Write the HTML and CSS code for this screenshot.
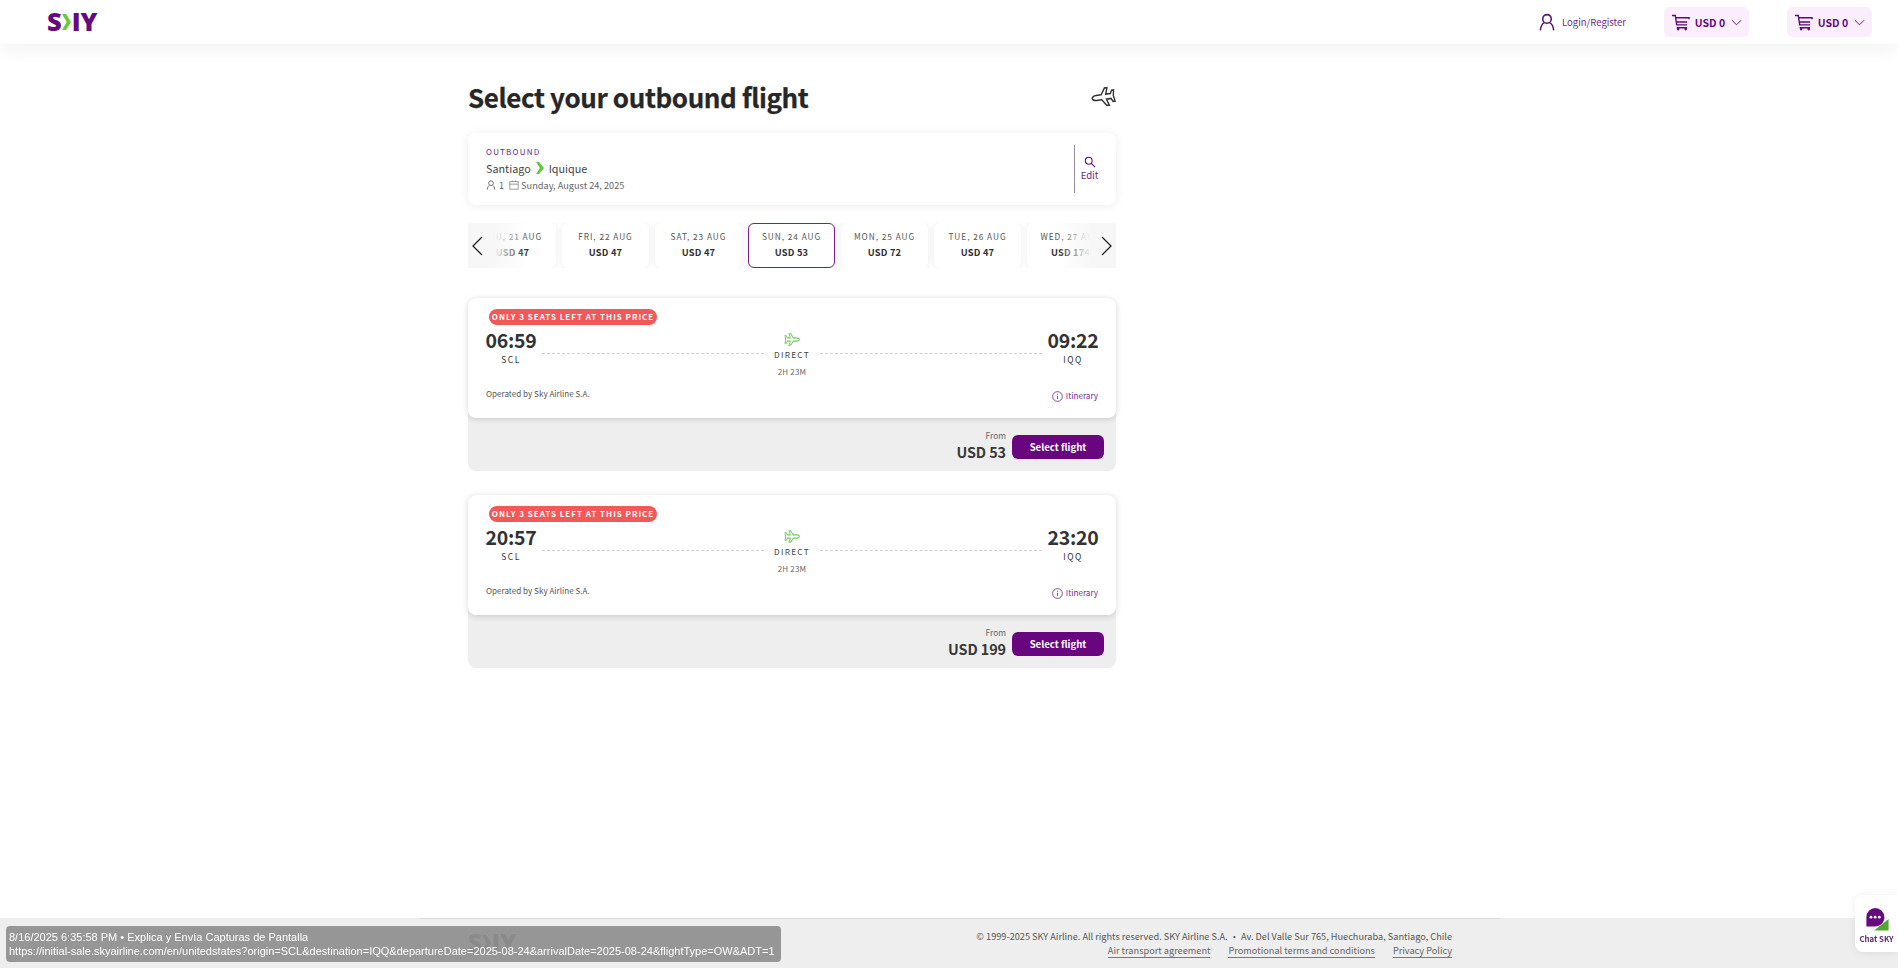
FILE: index.html
```html
<!DOCTYPE html>
<html lang="en">
<head>
<meta charset="utf-8">
<title>Select your outbound flight</title>
<link rel="stylesheet" href="styles.css">
</head>
<body>
<div class="page">
  <header class="topbar">
    <div class="logo"><span>S</span><svg class="logo-chev" viewBox="0 0 10 18"><path d="M0 0h4.600L10 9l-5.400 9H0l5.200-9z"/></svg><span>IY</span></div>
    <div class="top-actions">
      <a class="login">
        <svg class="ic-user" viewBox="0 0 18 20"><circle cx="9" cy="6.500" r="4.800"/><path d="M1.500 19.500c.5-5 3-8 4.500-8.500M16.500 19.500c-.5-5-3-8-4.500-8.500"/></svg>
        <span>Login/Register</span>
      </a>
      <div class="cart">
        <svg class="ic-cart" viewBox="0 0 20 18"><path d="M1 1.500h3.500l1.500 10h11M5 4h14v1.500M6 8.500h11M6 14.500h11"/><circle cx="7.500" cy="16" r="1.400"/><circle cx="15.500" cy="16" r="1.400"/></svg>
        <b>USD 0</b>
        <svg class="ic-down" viewBox="0 0 12 7"><path d="M1 1l5 5 5-5"/></svg>
      </div>
      <div class="cart">
        <svg class="ic-cart" viewBox="0 0 20 18"><path d="M1 1.500h3.500l1.500 10h11M5 4h14v1.500M6 8.500h11M6 14.500h11"/><circle cx="7.500" cy="16" r="1.400"/><circle cx="15.500" cy="16" r="1.400"/></svg>
        <b>USD 0</b>
        <svg class="ic-down" viewBox="0 0 12 7"><path d="M1 1l5 5 5-5"/></svg>
      </div>
    </div>
  </header>

  <main class="main">
    <div class="title-row">
      <h1>Select your outbound flight</h1>
      <svg class="ic-title-plane" viewBox="0 0 24 16" preserveAspectRatio="none"><path d="M23 8c0-1-2-2-4-2h-5L10 1H7.500l2 5H5L3.500 3.500h-2L2.500 8l-1 4.500h2L5 10h4.500l-2 5H10l4-5h5c2 0 4-1 4-2z"/></svg>
    </div>

    <section class="summary">
      <div class="summary-info">
        <div class="eyebrow">OUTBOUND</div>
        <div class="route">Santiago <svg class="route-chev" viewBox="0 0 8 12"><path d="M0 0h3l5 6-5 6H0l4-6z"/></svg> Iquique</div>
        <div class="meta">
          <svg class="ic-mini" viewBox="0 0 12 12"><circle cx="6" cy="3.800" r="2.800"/><path d="M1.500 11.500c.3-3 1.500-4.500 2.500-5M10.500 11.500c-.3-3-1.500-4.500-2.500-5"/></svg>
          <span class="pax">1</span>
          <svg class="ic-mini cal" viewBox="0 0 12 12"><rect x="1" y="2" width="10" height="9"/><path d="M1 5h10M4 .5v2M8 .5v2"/></svg>
          <span>Sunday, August 24, 2025</span>
        </div>
      </div>
      <a class="edit">
        <svg class="ic-search" viewBox="0 0 14 14"><circle cx="5.500" cy="5.500" r="4"/><path d="M8.500 8.500l4.500 4.500"/></svg>
        <span>Edit</span>
      </a>
    </section>

    <section class="dates">
      <div class="date"><span>THU, 21 AUG</span><b>USD 47</b></div>
      <div class="date"><span>FRI, 22 AUG</span><b>USD 47</b></div>
      <div class="date"><span>SAT, 23 AUG</span><b>USD 47</b></div>
      <div class="date active"><span>SUN, 24 AUG</span><b>USD 53</b></div>
      <div class="date"><span>MON, 25 AUG</span><b>USD 72</b></div>
      <div class="date"><span>TUE, 26 AUG</span><b>USD 47</b></div>
      <div class="date"><span>WED, 27 AUG</span><b>USD 174</b></div>
      <div class="fade fade-left"><svg viewBox="0 0 12 20"><path d="M11 1L2 10l9 9"/></svg></div>
      <div class="fade fade-right"><svg viewBox="0 0 12 20"><path d="M1 1l9 9-9 9"/></svg></div>
    </section>

    <article class="flight">
      <div class="flight-card">
        <div class="badge">ONLY 3 SEATS LEFT AT THIS PRICE</div>
        <div class="flight-grid">
          <div class="stop"><strong>06:59</strong><span>SCL</span></div>
          <div class="line"></div>
          <div class="mid">
            <svg class="ic-plane" viewBox="0 0 24 16" preserveAspectRatio="none"><path d="M23 8c0-1-2-2-4-2h-5L10 1H7.500l2 5H5L3.500 3.500h-2L2.500 8l-1 4.500h2L5 10h4.500l-2 5H10l4-5h5c2 0 4-1 4-2z"/></svg>
            <div class="direct">DIRECT</div>
            <div class="dur">2H 23M</div>
          </div>
          <div class="line"></div>
          <div class="stop"><strong>09:22</strong><span>IQQ</span></div>
        </div>
        <div class="flight-foot">
          <span class="operated">Operated by Sky Airline S.A.</span>
          <a class="itin"><svg class="ic-info" viewBox="0 0 12 12"><circle cx="6" cy="6" r="5.300"/><path d="M6 5.200v3.600M6 3v1"/></svg>Itinerary</a>
        </div>
      </div>
      <div class="price-bar">
        <div class="price"><small>From</small><b>USD 53</b></div>
        <button class="select">Select flight</button>
      </div>
    </article>

    <article class="flight">
      <div class="flight-card">
        <div class="badge">ONLY 3 SEATS LEFT AT THIS PRICE</div>
        <div class="flight-grid">
          <div class="stop"><strong>20:57</strong><span>SCL</span></div>
          <div class="line"></div>
          <div class="mid">
            <svg class="ic-plane" viewBox="0 0 24 16" preserveAspectRatio="none"><path d="M23 8c0-1-2-2-4-2h-5L10 1H7.500l2 5H5L3.500 3.500h-2L2.500 8l-1 4.500h2L5 10h4.500l-2 5H10l4-5h5c2 0 4-1 4-2z"/></svg>
            <div class="direct">DIRECT</div>
            <div class="dur">2H 23M</div>
          </div>
          <div class="line"></div>
          <div class="stop"><strong>23:20</strong><span>IQQ</span></div>
        </div>
        <div class="flight-foot">
          <span class="operated">Operated by Sky Airline S.A.</span>
          <a class="itin"><svg class="ic-info" viewBox="0 0 12 12"><circle cx="6" cy="6" r="5.300"/><path d="M6 5.200v3.600M6 3v1"/></svg>Itinerary</a>
        </div>
      </div>
      <div class="price-bar">
        <div class="price"><small>From</small><b>USD 199</b></div>
        <button class="select">Select flight</button>
      </div>
    </article>
  </main>

  <footer class="footer">
    <div class="footer-inner">
      <div class="logo logo-gray"><span>S</span><svg class="logo-chev" viewBox="0 0 10 18"><path d="M0 0h4.600L10 9l-5.400 9H0l5.200-9z"/></svg><span>IY</span></div>
      <div class="legal">
        <p>© 1999-2025 SKY Airline. All rights reserved. SKY Airline S.A. · Av. Del Valle Sur 765, Huechuraba, Santiago, Chile</p>
        <nav class="legal-links"><a>Air transport agreement</a><a>Promotional terms and conditions</a><a>Privacy Policy</a></nav>
      </div>
    </div>
  </footer>
</div>

<div class="stamp">
  <div>8/16/2025 6:35:58 PM • Explica y Envía Capturas de Pantalla</div>
  <div>https://initial-sale.skyairline.com/en/unitedstates?origin=SCL&amp;destination=IQQ&amp;departureDate=2025-08-24&amp;arrivalDate=2025-08-24&amp;flightType=OW&amp;ADT=1</div>
</div>

<div class="chat">
  <svg class="chat-ic" viewBox="0 0 26 26"><path class="g" d="M10 25.500h15.500V13z"/><path class="p" d="M11 1a10 10 0 0 1 10 10c0 3-1 5-2.500 7-1.500 1.500-4 3-7.500 3H1.500V11A10 10 0 0 1 11 1z"/><circle class="w" cx="6.500" cy="11" r="1.500"/><circle class="w" cx="11" cy="11" r="1.500"/><circle class="w" cx="15.500" cy="11" r="1.500"/></svg>
  <span>Chat SKY</span>
</div>
</body>
</html>
```

FILE: styles.css
```css
* { box-sizing: border-box; }
html, body { margin: 0; padding: 0; height: 100%; }
body {
  font-family: "Noto Sans CJK SC", "Noto Sans", sans-serif;
  color: #333;
  background: #fff;
  overflow: hidden;
}
svg { display: block; fill: none; }
.page { min-height: 968px; height: 968px; display: flex; flex-direction: column; }

/* header */
.topbar {
  height: 44px;
  flex: none;
  display: flex;
  align-items: center;
  justify-content: space-between;
  padding: 0 26px 0 47px;
  background: #fff;
  box-shadow: 0 6px 18px rgba(0, 0, 0, .05);
  position: relative;
}
.logo {
  display: flex;
  align-items: center;
  font-family: "Open Sans", sans-serif;
  font-weight: 800;
  font-size: 25.500px;
  line-height: 1;
  color: #660a7f;
}
.logo-chev { width: 9px; height: 18px; margin: 0 1px 0 0; }
.logo-chev path { fill: #6cc93c; }
.top-actions { display: flex; align-items: center; }
.login {
  display: flex;
  align-items: center;
  gap: 7px;
  font-size: 9.500px;
  color: #6a2a7f;
  margin-right: 38px;
}
.ic-user { width: 16px; height: 18px; }
.ic-user * { stroke: #5e0b78; stroke-width: 1.700; }
.cart {
  width: 85px;
  height: 30px;
  display: flex;
  align-items: center;
  justify-content: center;
  gap: 5px;
  background: #fbeefc;
  border-radius: 6px;
  font-size: 10.500px;
  color: #5e0b78;
}
.cart + .cart { margin-left: 38px; }
.ic-cart { width: 19px; height: 17px; }
.ic-cart path { stroke: #5e0b78; stroke-width: 1.500; }
.ic-cart circle { fill: #5e0b78; }
.ic-down { width: 11px; height: 7px; margin-left: 1px; }
.ic-down path { stroke: #5e0b78; stroke-width: 1; }

/* main column */
.main { flex: 1; width: 648px; margin-left: 468px; display: flex; flex-direction: column; }
.title-row { height: 89px; display: flex; align-items: center; justify-content: space-between; padding-top: 17px; }
h1 { margin: 0; font-size: 26px; font-weight: 700; letter-spacing: -.4px; color: #272727; line-height: 1; -webkit-text-stroke: .25px #272727; }
.ic-title-plane { width: 25px; height: 20px; transform: scaleX(-1) rotate(8deg); }
.ic-title-plane path { stroke: #333; stroke-width: 1.300; }

.summary {
  height: 72px;
  display: flex;
  justify-content: space-between;
  align-items: center;
  padding: 0 12px 0 18px;
  background: #fff;
  border-radius: 8px;
  box-shadow: 0 1px 10px rgba(0, 0, 0, .08);
}
.eyebrow { font-size: 8px; letter-spacing: 1.200px; color: #71237f; line-height: 12px; }
.route { display: flex; align-items: center; gap: 3px; font-size: 10.800px; color: #444; line-height: 18px; margin-top: 1px; }
.route-chev { width: 8px; height: 12px; margin: 0 2px; }
.route-chev path { fill: #5cc63c; }
.meta { display: flex; align-items: center; gap: 2px; font-size: 9.200px; color: #666; line-height: 14px; margin-top: 1px; }
.ic-mini { width: 10px; height: 10px; }
.ic-mini * { stroke: #555; stroke-width: 1; }
.pax { margin: 0 3px 0 1px; }
.cal * { stroke: #888; }
.edit {
  height: 48px;
  width: 30px;
  border-left: 1px solid #9b8aa0;
  display: flex;
  flex-direction: column;
  align-items: center;
  justify-content: center;
  gap: 0;
  font-size: 9.600px;
  color: #6a2a7f;
}
.ic-search { width: 12px; height: 12px; }
.ic-search * { stroke: #5e0b78; stroke-width: 1.200; }

/* dates */
.dates {
  position: relative;
  height: 45px;
  margin-top: 18px;
  display: flex;
  gap: 6px;
  padding-left: 1px;
  overflow: hidden;
  background: #fff;
}
.date {
  flex: none;
  width: 87px;
  background: #fff;
  border-radius: 6px;
  display: flex;
  flex-direction: column;
  align-items: center;
  justify-content: center;
  box-shadow: 0 0 6px rgba(0, 0, 0, .08);
  font-size: 8.300px;
  color: #555;
  letter-spacing: .95px;
}
.date span { line-height: 14px; margin-top: -2px; }
.date b { font-size: 9.300px; letter-spacing: .2px; color: #2f2f2f; line-height: 18px; }
.date.active { border: 1px solid #7a1e8e; }
.fade {
  position: absolute;
  top: 0;
  bottom: 0;
  width: 66px;
  display: flex;
  align-items: center;
}
.fade svg { width: 12px; height: 20px; }
.fade path { stroke: #222; stroke-width: 1.300; }
.fade-left { left: 0; padding-left: 3px; background: linear-gradient(90deg, #f7f7f7 38%, rgba(247, 247, 247, 0) 90%); }
.fade-right { right: 0; padding-right: 3px; justify-content: flex-end; background: linear-gradient(270deg, #f7f7f7 38%, rgba(247, 247, 247, 0) 90%); }

/* flight cards */
.flight { margin-top: 30px; background: #eee; border-radius: 8px; height: 173px; display: flex; flex-direction: column; }
.flight + .flight { margin-top: 24px; }
.flight-card {
  height: 120px;
  flex: none;
  background: #fff;
  border-radius: 8px;
  padding: 11px 18px 0;
  box-shadow: 0 1px 6px rgba(0, 0, 0, .16);
}
.badge {
  width: 168px;
  height: 16px;
  margin-left: 3px;
  background: #f25858;
  color: #fff;
  border-radius: 8px;
  font-size: 8px;
  font-weight: 700;
  letter-spacing: 1px;
  line-height: 15px;
  text-align: center;
  white-space: nowrap;
}
.flight-grid { display: grid; grid-template-columns: 50px 1fr 44px 1fr 50px; column-gap: 6px; height: 57px; margin-top: 2px; }
.stop { display: flex; flex-direction: column; align-items: center; }
.stop strong { font-size: 19.500px; letter-spacing: -.25px; font-weight: 700; color: #333; line-height: 26px; }
.stop span { font-size: 8.500px; letter-spacing: 1.500px; color: #333; line-height: 12px; }
.line { border-top: 1px dashed #cfcfcf; margin-top: 26px; height: 1px; }
.mid { display: flex; flex-direction: column; align-items: center; white-space: nowrap; }
.ic-plane { width: 16px; height: 13px; margin-top: 6px; flex: none; }
.ic-plane path { stroke: #6ccb57; stroke-width: 1.300; }
.direct { font-size: 8.200px; letter-spacing: 1.300px; color: #444; line-height: 12px; margin-top: 2px; }
.dur { font-size: 8px; color: #666; line-height: 12px; margin-top: 6px; letter-spacing: .2px; }
.flight-foot { display: flex; justify-content: space-between; align-items: flex-start; margin-top: 3px; }
.operated { font-size: 8.100px; color: #555; line-height: 14px; }
.itin { display: flex; align-items: center; gap: 3px; font-size: 8.100px; color: #7a2a8f; line-height: 14px; margin-top: 2px; }
.ic-info { width: 11px; height: 11px; }
.ic-info * { stroke: #6a2a7f; stroke-width: .9; }

.price-bar { flex: 1; display: flex; justify-content: flex-end; align-items: center; gap: 6px; padding: 4px 12px 0; }
.price { display: flex; flex-direction: column; align-items: flex-end; }
.price small { font-size: 8.400px; color: #666; line-height: 10px; }
.price b { font-size: 14.400px; letter-spacing: -.1px; color: #383838; line-height: 23px; }
.select {
  width: 92px;
  height: 24px;
  border: 0;
  border-radius: 6px;
  background: #6a0580;
  color: #fff;
  font-family: inherit;
  font-size: 9.600px;
  font-weight: 700;
  padding: 0;
}

/* footer */
.footer { height: 50px; flex: none; background: #eee; }
.footer-inner {
  width: 1080px;
  height: 100%;
  margin-left: 420px;
  border-top: 1px solid #dcdcdc;
  padding: 9px 48px 0;
  display: flex;
  justify-content: space-between;
}
.logo-gray { color: #8a8a8a; height: 26px; margin-top: 2px; font-size: 24px; }
.logo-gray .logo-chev path { fill: #8a8a8a; }
.legal { text-align: right; font-size: 9.200px; color: #555; }
.legal p { margin: 0; line-height: 16px; }
.legal-links { display: flex; justify-content: flex-end; gap: 18px; line-height: 13px; color: #666; }
.legal-links a { border-bottom: 1px solid #777; }

/* overlays */
.stamp {
  position: fixed;
  left: 6px;
  top: 926px;
  width: 775px;
  height: 36px;
  padding: 4px 3px;
  background: rgba(138, 138, 138, .88);
  border-radius: 4px;
  color: #fff;
  font-family: "Liberation Sans", Arial, sans-serif;
  font-size: 11px;
  line-height: 14px;
  white-space: nowrap;
}
.chat {
  position: fixed;
  right: 0;
  top: 895px;
  width: 43px;
  height: 57px;
  background: #fff;
  border-radius: 8px 0 0 8px;
  box-shadow: 0 1px 8px rgba(0, 0, 0, .08);
  display: flex;
  flex-direction: column;
  align-items: center;
  padding-top: 12px;
  font-size: 7.800px;
  font-weight: 700;
  color: #5e2a70;
}
.chat-ic { width: 24px; height: 24px; margin-bottom: 2px; }
.chat-ic .p { fill: #660a7f; }
.chat-ic .g { fill: #4fa82c; }
.chat-ic .w { fill: #fff; }
```
